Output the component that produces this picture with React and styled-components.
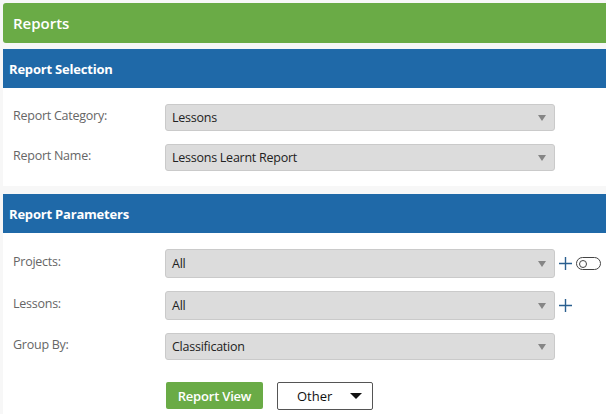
import React from 'react';
import styled, { createGlobalStyle } from 'styled-components';

const Global = createGlobalStyle`
    html, body {
        margin: 0;
        padding: 0;
        background: #f7f7f7;
        font-family: "Open Sans", "Noto Sans", sans-serif;
    }
`;

const Page = styled.div`
    padding: 3px 0 0 3px;
    display: flex;
    flex-direction: column;
`;

const TitleBar = styled.div`
    height: 40px;
    background: #6aab46;
    border-radius: 3px 0 0 3px;
    color: #fff;
    font-size: 15px;
    font-weight: 600;
    display: flex;
    align-items: center;
    padding-left: 10px;
    margin-bottom: 6px;
`;

const SectionHead = styled.div`
    height: 39px;
    background: #1f69a8;
    color: #fff;
    font-size: 13px;
    font-weight: 700;
    letter-spacing: -0.2px;
    display: flex;
    align-items: center;
    padding-left: 6px;
`;

const Body = styled.div`
    background: #fff;
    padding: ${(p) => p.pad || '16px 0 15px 10px'};
    display: flex;
    flex-direction: column;
    gap: ${(p) => p.gap || '13px'};
    margin-bottom: ${(p) => p.mb || '0'};
`;

const Row = styled.div`
    display: flex;
    align-items: center;
    height: ${(p) => p.h || '27px'};
`;

const Label = styled.div`
    width: 152px;
    font-size: 12.5px;
    letter-spacing: -0.25px;
    color: #666;
    padding-bottom: ${(p) => p.pb || '4px'};
`;

const Select = styled.div`
    width: 390px;
    height: 100%;
    box-sizing: border-box;
    background: #dcdcdc;
    border: 1px solid #cacaca;
    border-radius: 3px;
    display: flex;
    align-items: center;
    justify-content: space-between;
    padding: 0 8px 0 6px;
    font-size: 12.5px;
    letter-spacing: -0.25px;
    color: #222;
`;

const Caret = styled.span`
    width: 0;
    height: 0;
    border-left: 4px solid transparent;
    border-right: 4px solid transparent;
    border-top: 6px solid #858585;
`;

const Extras = styled.div`
    display: flex;
    align-items: center;
    gap: 3px;
    margin-left: 3px;
`;

const Toggle = styled.span`
    width: 21px;
    height: 11px;
    border: 1.3px solid #444;
    border-radius: 7px;
    display: flex;
    align-items: center;
    padding-left: 2px;

    &::before {
        content: '';
        width: 6px;
        height: 6px;
        border: 1.3px solid #444;
        border-radius: 50%;
    }
`;

const Buttons = styled.div`
    display: flex;
    gap: 14px;
    padding-left: 153px;
    margin-top: 9px;
`;

const GreenButton = styled.button`
    width: 97px;
    height: 27px;
    border: none;
    border-radius: 2px;
    background: #6aab46;
    color: #fff;
    font-family: inherit;
    font-size: 13px;
    font-weight: 600;
    letter-spacing: -0.2px;
`;

const OtherButton = styled.button`
    width: 96px;
    height: 28px;
    box-sizing: border-box;
    background: #fff;
    border: 1px solid #555;
    border-radius: 2px;
    font-family: inherit;
    font-size: 13px;
    color: #111;
    display: flex;
    align-items: center;
    padding: 0 10px 0 19px;
    justify-content: space-between;
`;

const BlackCaret = styled.span`
    width: 0;
    height: 0;
    border-left: 6px solid transparent;
    border-right: 6px solid transparent;
    border-top: 6px solid #111;
`;

const Plus = () => (
    <svg width="15" height="15" viewBox="0 0 15 15">
        <path d="M7.5 1v13M1 7.5h13" stroke="#2a5f8f" strokeWidth="1.4" />
    </svg>
);

const Field = ({ label, value, children, h }) => (
    <Row h={h}>
        <Label>{label}</Label>
        <Select>
            <span>{value}</span>
            <Caret />
        </Select>
        {children}
    </Row>
);

const App = () => {
    return (
        <>
            <Global />
            <Page>
                <TitleBar>Reports</TitleBar>
                <SectionHead>Report Selection</SectionHead>
                <Body mb="8px">
                    <Field label="Report Category:" value="Lessons" />
                    <Field label="Report Name:" value="Lessons Learnt Report" />
                </Body>
                <SectionHead>Report Parameters</SectionHead>
                <Body pad="16px 0 10px 10px" gap="13px">
                    <Field label="Projects:" value="All" h="29px">
                        <Extras>
                            <Plus />
                            <Toggle />
                        </Extras>
                    </Field>
                    <Field label="Lessons:" value="All" h="29px">
                        <Extras>
                            <Plus />
                        </Extras>
                    </Field>
                    <Field label="Group By:" value="Classification" />
                    <Buttons>
                        <GreenButton>Report View</GreenButton>
                        <OtherButton>
                            Other
                            <BlackCaret />
                        </OtherButton>
                    </Buttons>
                </Body>
            </Page>
        </>
    );
};

export default App;
